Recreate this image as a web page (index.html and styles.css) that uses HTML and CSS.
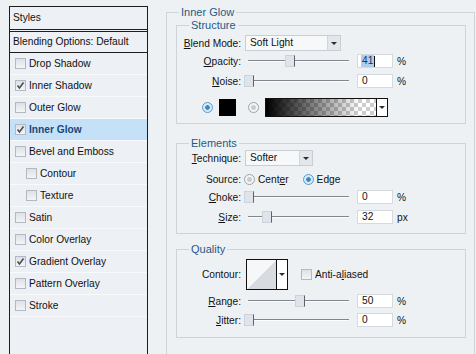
FILE: index.html
```html
<!DOCTYPE html>
<html lang="en">
<head>
	<meta charset="UTF-8">
	<title>Layer Style - Inner Glow</title>
	<link rel="stylesheet" href="styles.css">
</head>
<body>
<div class="dialog">

	<div class="styles">
		<div class="styles-head">Styles</div>
		<div class="styles-blend">Blending Options: Default</div>
		<ul class="fx-list">
			<li class="fx"><span class="check"></span>Drop Shadow</li>
			<li class="fx"><span class="check"><svg viewBox="0 0 9 9"><polyline points="1.5,4.5 3.5,7 7.5,1.5"/></svg></span>Inner Shadow</li>
			<li class="fx"><span class="check"></span>Outer Glow</li>
			<li class="fx active"><span class="check"><svg viewBox="0 0 9 9"><polyline points="1.5,4.5 3.5,7 7.5,1.5"/></svg></span>Inner Glow</li>
			<li class="fx"><span class="check"></span>Bevel and Emboss</li>
			<li class="fx sub"><span class="check"></span>Contour</li>
			<li class="fx sub"><span class="check"></span>Texture</li>
			<li class="fx"><span class="check"></span>Satin</li>
			<li class="fx"><span class="check"></span>Color Overlay</li>
			<li class="fx"><span class="check"><svg viewBox="0 0 9 9"><polyline points="1.5,4.5 3.5,7 7.5,1.5"/></svg></span>Gradient Overlay</li>
			<li class="fx"><span class="check"></span>Pattern Overlay</li>
			<li class="fx"><span class="check"></span>Stroke</li>
		</ul>
	</div>

	<fieldset class="box outer">
		<legend>Inner Glow</legend>

		<fieldset class="box inner structure">
			<legend>Structure</legend>
			<div class="row blend-row">
				<span class="lbl"><u>B</u>lend Mode:</span>
				<div class="select blend-select"><span class="select-text">Soft Light</span><span class="select-btn"><i class="tri"></i></span></div>
			</div>
			<div class="row slider-row opacity-row">
				<span class="lbl"><u>O</u>pacity:</span>
				<div class="track"><span class="thumb" style="left: 41%"></span></div>
				<div class="num"><span class="hl">41</span><span class="caret"></span></div>
				<span class="unit">%</span>
			</div>
			<div class="row slider-row noise-row">
				<span class="lbl"><u>N</u>oise:</span>
				<div class="track"><span class="thumb" style="left: 0%"></span></div>
				<div class="num">0</div>
				<span class="unit">%</span>
			</div>
			<div class="row color-row">
				<span class="radio on"></span>
				<span class="swatch"></span>
				<span class="radio"></span>
				<div class="gradient"><span class="gradient-fill"></span><span class="select-btn"><i class="tri"></i></span></div>
			</div>
		</fieldset>

		<fieldset class="box inner elements">
			<legend>Elements</legend>
			<div class="row technique-row">
				<span class="lbl"><u>T</u>echnique:</span>
				<div class="select technique-select"><span class="select-text">Softer</span><span class="select-btn"><i class="tri"></i></span></div>
			</div>
			<div class="row source-row">
				<span class="lbl">Source:</span>
				<span class="radio"></span><span class="opt">Cent<u>e</u>r</span>
				<span class="radio on edge"></span><span class="opt">Edge</span>
			</div>
			<div class="row slider-row choke-row">
				<span class="lbl"><u>C</u>hoke:</span>
				<div class="track"><span class="thumb" style="left: 0%"></span></div>
				<div class="num">0</div>
				<span class="unit">%</span>
			</div>
			<div class="row slider-row size-row">
				<span class="lbl"><u>S</u>ize:</span>
				<div class="track"><span class="thumb" style="left: 18%"></span></div>
				<div class="num">32</div>
				<span class="unit">px</span>
			</div>
		</fieldset>

		<fieldset class="box inner quality">
			<legend>Quality</legend>
			<div class="row contour-row">
				<span class="lbl">Contour:</span>
				<div class="contour"><span class="contour-curve"></span><span class="select-btn"><i class="tri"></i></span></div>
				<span class="check aa"></span><span class="opt">Anti-a<u>l</u>iased</span>
			</div>
			<div class="row slider-row range-row">
				<span class="lbl"><u>R</u>ange:</span>
				<div class="track"><span class="thumb" style="left: 50%"></span></div>
				<div class="num">50</div>
				<span class="unit">%</span>
			</div>
			<div class="row slider-row jitter-row">
				<span class="lbl"><u>J</u>itter:</span>
				<div class="track"><span class="thumb" style="left: 0%"></span></div>
				<div class="num">0</div>
				<span class="unit">%</span>
			</div>
		</fieldset>
	</fieldset>

</div>
</body>
</html>
```

FILE: styles.css
```css
body {
	margin: 0;
	background: #eef1f4;
	font: 10.2px "Liberation Sans", Arial, sans-serif;
	color: #111;
}
u {
	text-decoration: underline;
	text-underline-offset: 1px;
}
.dialog {
	display: flex;
	align-items: flex-start;
	padding: 6px 0 0 9px;
	height: 348px;
	overflow: hidden;
}

/* styles list on the left */
.styles {
	flex: none;
	width: 137px;
	height: 360px;
	border: 1px solid #1d1d1d;
	background: #edf0f4;
}
.styles-head {
	height: 22px;
	line-height: 22px;
	padding-left: 3px;
	border-bottom: 3px double #1d1d1d;
}
.styles-blend {
	height: 20px;
	line-height: 20px;
	padding-left: 3px;
	border-bottom: 1px solid #1d1d1d;
}
.fx-list {
	list-style: none;
	margin: 0;
	padding: 0;
}
.fx {
	display: flex;
	align-items: center;
	gap: 3px;
	height: 21px;
	padding-left: 5px;
	border-bottom: 1px solid #f8fafc;
}
.fx.sub {
	padding-left: 16px;
}
.fx.active {
	background: #c5e1f8;
	color: #17477a;
	font-weight: bold;
}
.check {
	flex: none;
	display: inline-block;
	box-sizing: border-box;
	width: 11px;
	height: 11px;
	border: 1px solid #b3b9c1;
	background: linear-gradient(#dde1e6, #f3f5f7);
}
.check svg {
	display: block;
	width: 9px;
	height: 9px;
}
.check polyline {
	fill: none;
	stroke: #4a4f55;
	stroke-width: 1.6;
}

/* group boxes */
.box {
	margin: 0;
	padding: 0;
	min-width: 0;
	border: 1px solid #cfd4da;
}
.box > legend {
	margin-left: 12px;
	padding: 0 2px;
	font-size: 11px;
	line-height: 12px;
	color: #245a86;
}
.outer {
	width: 307px;
	margin-left: 18px;
	padding-bottom: 40px;
}
.inner {
	margin: 1px 8px 0 9px;
}
.structure {
	padding-bottom: 6px;
}
.elements {
	margin-top: 13px;
	padding-bottom: 9px;
}
.quality {
	margin-top: 9px;
	padding-bottom: 10px;
}

/* rows */
.row {
	display: flex;
	align-items: center;
	height: 14px;
}
.lbl {
	flex: none;
	width: 64px;
	text-align: right;
}
.blend-row {
	margin-top: 4px;
	height: 16px;
}
.opacity-row {
	margin-top: 3px;
}
.noise-row {
	margin-top: 6px;
}
.color-row {
	margin-top: 10px;
	height: 19px;
	padding-left: 25px;
}
.technique-row {
	margin-top: 1px;
	height: 16px;
}
.source-row {
	margin-top: 6px;
}
.choke-row {
	margin-top: 4px;
}
.size-row {
	margin-top: 6px;
}
.contour-row {
	margin-top: 4px;
	height: 31px;
}
.range-row {
	margin-top: 4px;
}
.jitter-row {
	margin-top: 5px;
}

/* dropdowns */
.select {
	display: flex;
	box-sizing: border-box;
	height: 16px;
	margin-left: 4px;
	border: 1px solid #c9ced5;
	background: #f6f8fa;
}
.blend-select {
	width: 96px;
}
.technique-select {
	width: 68px;
}
.select-text {
	flex: 1;
	padding-left: 4px;
	line-height: 14px;
}
.select-btn {
	flex: none;
	display: flex;
	align-items: center;
	justify-content: center;
	width: 12px;
	background: #e3e7ec;
	border-left: 1px solid #d2d6dc;
}
.tri {
	width: 0;
	height: 0;
	border-left: 3px solid transparent;
	border-right: 3px solid transparent;
	border-top: 3px solid #2a2e33;
}

/* sliders */
.track {
	position: relative;
	flex: none;
	width: 101px;
	height: 14px;
	margin-left: 7px;
}
.track::before {
	content: "";
	position: absolute;
	left: 0;
	right: 0;
	top: 6px;
	border-top: 1px solid #80868e;
	border-bottom: 1px solid #fbfcfd;
}
.thumb {
	position: absolute;
	top: 1px;
	width: 8px;
	height: 10px;
	margin-left: -4px;
	background: #dfe4ea;
	border: 1px solid #cdd3da;
	border-right-color: #5d6269;
}
.num {
	flex: none;
	box-sizing: border-box;
	width: 36px;
	height: 14px;
	margin-left: 8px;
	padding-left: 4px;
	line-height: 12px;
	background: #fff;
	border: 1px solid #d5dae0;
	display: flex;
	align-items: center;
}
.hl {
	background: #b3cceb;
	color: #14386a;
	padding: 0 1px;
	margin-left: -1px;
}
.caret {
	width: 1px;
	height: 11px;
	background: #111;
}
.unit {
	margin-left: 4px;
}

/* radios and colour */
.radio {
	flex: none;
	box-sizing: border-box;
	width: 11px;
	height: 11px;
	border-radius: 50%;
	border: 1px solid #9ba1a9;
	background: radial-gradient(circle, #c8ccd1 0 2px, #f3f5f7 3px);
}
.radio.on {
	border-color: #5b98c8;
	background: radial-gradient(circle, #3f87c3 0 2px, #d7eaf8 2.6px);
}
.source-row .radio {
	margin-left: 3px;
}
.source-row .radio.edge {
	margin-left: 14px;
}
.opt {
	margin-left: 3px;
}
.swatch {
	flex: none;
	width: 17px;
	height: 17px;
	margin-left: 6px;
	background: #000;
}
.color-row .radio + .swatch + .radio {
	margin-left: 12px;
}
.gradient {
	display: flex;
	box-sizing: border-box;
	width: 123px;
	height: 19px;
	margin-left: 6px;
	border: 1px solid #111;
}
.gradient-fill {
	flex: 1;
	background: linear-gradient(to right, #000, rgba(0, 0, 0, 0) 85%),
		repeating-conic-gradient(#cdcdcd 0 25%, #fff 0 50%) 0 0 / 8px 8px;
}
.gradient .select-btn,
.contour .select-btn {
	width: 10px;
	background: #fff;
	border-left: 1px solid #111;
}

/* contour */
.contour {
	display: flex;
	box-sizing: border-box;
	width: 42px;
	height: 31px;
	margin-left: 5px;
	border: 1px solid #111;
}
.contour-curve {
	flex: 1;
	background: linear-gradient(to top left, #d8dbdf 50%, #f6f7f9 50%);
}
.check.aa {
	margin-left: 13px;
}
```
